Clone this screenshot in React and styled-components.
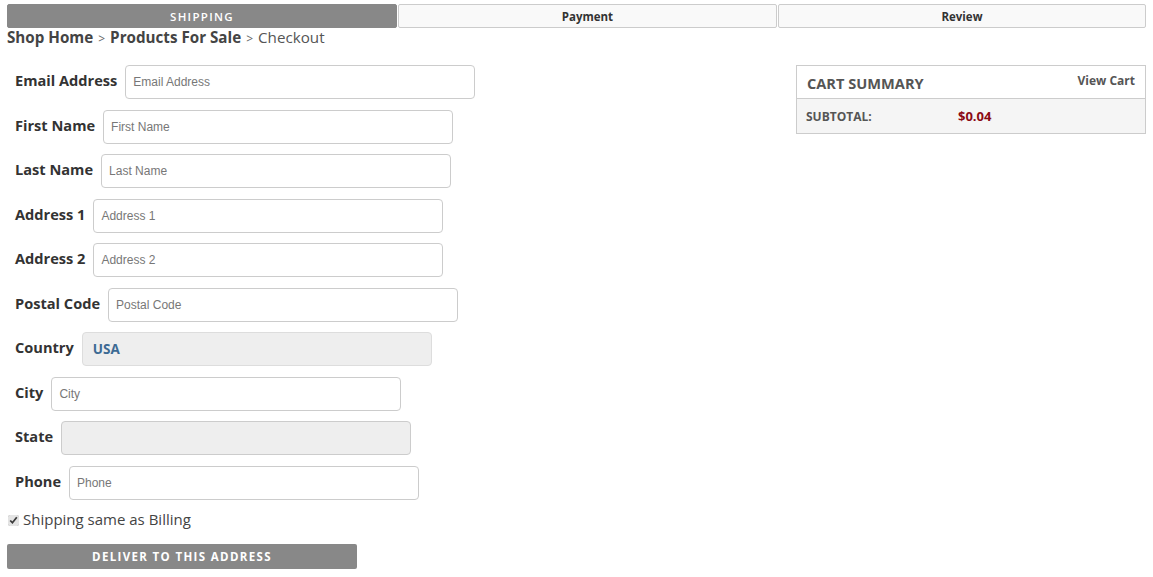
import React from 'react';
import styled, { createGlobalStyle } from 'styled-components';

const GlobalStyle = createGlobalStyle`
  body {
    margin: 0;
    background: #ffffff;
    font-family: 'Open Sans', sans-serif;
    color: #333333;
  }
`
const Page = styled.div`
  padding: 4px 7px 0 7px;
  width: 1139px;
`
const Tabs = styled.div`
  display: flex;
  flex-direction: row;
  gap: 1px;
`
const Tab = styled.div`
  flex: ${props => props.grow ? props.grow : 1};
  height: 22px;
  display: flex;
  align-items: center;
  justify-content: center;
  border: 1px solid ${props => props.active ? "#888888" : "#cccccc"};
  border-radius: 2px;
  background-color: ${props => props.active ? "#888888" : "#f9f9f9"};
  color: ${props => props.active ? "#ffffff" : "#333333"};
  font-size: ${props => props.active ? "11.5px" : "11.5px"};
  font-weight: ${props => props.active ? 600 : 700};
  letter-spacing: ${props => props.active ? "1.3px" : "0"};
`
const Crumbs = styled.div`
  margin-top: 0;
  font-size: 15.2px;
  line-height: 18px;
  color: #555555;
`
const CrumbLink = styled.span`
  font-weight: 700;
  color: #444444;
`
const Sep = styled.span`
  font-size: 12px;
  margin: 0 5px;
  color: #666666;
`
const Main = styled.div`
  display: flex;
  flex-direction: row;
  justify-content: space-between;
  margin-top: 17px;
`
const Form = styled.div`
  display: flex;
  flex-direction: column;
`
const Fields = styled.div`
  display: flex;
  flex-direction: column;
  gap: 10.5px;
  padding-left: 8px;
`
const Row = styled.div`
  display: flex;
  flex-direction: row;
  align-items: center;
`
const Label = styled.label`
  font-size: 14.6px;
  font-weight: 700;
  color: #333333;
  margin-right: 8px;
  margin-top: -4px;
`
const Input = styled.input`
  box-sizing: border-box;
  width: 350px;
  height: 34px;
  padding: 0 7px;
  border: 1px solid #cccccc;
  border-radius: 4px;
  background-color: ${props => props.disabled ? "#eeeeee" : "#ffffff"};
  font-family: 'Liberation Sans', Arial, sans-serif;
  font-size: 12px;
  color: #555555;
  &::placeholder {
    color: #777777;
  }
`
const Country = styled.div`
  box-sizing: border-box;
  width: 350px;
  height: 34px;
  padding: 0 10px;
  display: flex;
  align-items: center;
  border: 1px solid #dddddd;
  border-radius: 4px;
  background-color: #eeeeee;
  font-size: 13.5px;
  font-weight: 700;
  color: #3d6a94;
`
const Check = styled.label`
  display: flex;
  flex-direction: row;
  align-items: center;
  gap: 4px;
  margin-top: 9px;
  font-size: 15px;
  color: #444444;
  input {
    margin: 4px 0 0 1px;
    width: 11px;
    height: 11px;
    accent-color: #e4e4e4;
  }
`
const Button = styled.button`
  margin-top: 15px;
  width: 350px;
  height: 25px;
  border: none;
  border-radius: 2px;
  background-color: #888888;
  color: #ffffff;
  font-family: 'Open Sans', sans-serif;
  font-size: 11.5px;
  font-weight: 700;
  letter-spacing: 1.35px;
`
const Cart = styled.div`
  box-sizing: border-box;
  width: 350px;
  height: 69px;
  border: 1px solid #cccccc;
`
const CartHead = styled.div`
  height: 32px;
  display: flex;
  flex-direction: row;
  justify-content: space-between;
  align-items: flex-start;
  padding: 0 10px;
  border-bottom: 1px solid #cccccc;
`
const CartTitle = styled.div`
  font-size: 14.6px;
  font-weight: 700;
  color: #555555;
  margin-top: 7px;
`
const ViewCart = styled.div`
  font-size: 12px;
  font-weight: 700;
  color: #555555;
  margin-top: 6px;
`
const CartRow = styled.div`
  height: 34px;
  display: flex;
  flex-direction: row;
  align-items: center;
  padding: 0 9px;
  background-color: #f5f5f5;
`
const CartLabel = styled.div`
  width: 152px;
  font-size: 12px;
  font-weight: 700;
  color: #555555;
`
const Price = styled.div`
  font-size: 13px;
  font-weight: 700;
  color: #8b0a14;
`

const fields = [
  { label: "Email Address", placeholder: "Email Address" },
  { label: "First Name", placeholder: "First Name" },
  { label: "Last Name", placeholder: "Last Name" },
  { label: "Address 1", placeholder: "Address 1" },
  { label: "Address 2", placeholder: "Address 2" },
  { label: "Postal Code", placeholder: "Postal Code" },
  { label: "Country", country: true },
  { label: "City", placeholder: "City" },
  { label: "State", disabled: true },
  { label: "Phone", placeholder: "Phone" },
]

function App() {
  return (
    <Page>
      <GlobalStyle />
      <Tabs>
        <Tab active grow={390}>SHIPPING</Tab>
        <Tab grow={379}>Payment</Tab>
        <Tab grow={368}>Review</Tab>
      </Tabs>
      <Crumbs>
        <CrumbLink>Shop Home</CrumbLink><Sep>&gt;</Sep>
        <CrumbLink>Products For Sale</CrumbLink><Sep>&gt;</Sep>
        Checkout
      </Crumbs>
      <Main>
        <Form>
          <Fields>
            {fields.map(f => (
              <Row key={f.label}>
                <Label>{f.label}</Label>
                {f.country
                  ? <Country>USA</Country>
                  : <Input placeholder={f.placeholder} disabled={f.disabled} />}
              </Row>
            ))}
          </Fields>
          <Check>
            <input type="checkbox" defaultChecked />
            Shipping same as Billing
          </Check>
          <Button>DELIVER TO THIS ADDRESS</Button>
        </Form>
        <Cart>
          <CartHead>
            <CartTitle>CART SUMMARY</CartTitle>
            <ViewCart>View Cart</ViewCart>
          </CartHead>
          <CartRow>
            <CartLabel>SUBTOTAL:</CartLabel>
            <Price>$0.04</Price>
          </CartRow>
        </Cart>
      </Main>
    </Page>
  );
}

export default App;
